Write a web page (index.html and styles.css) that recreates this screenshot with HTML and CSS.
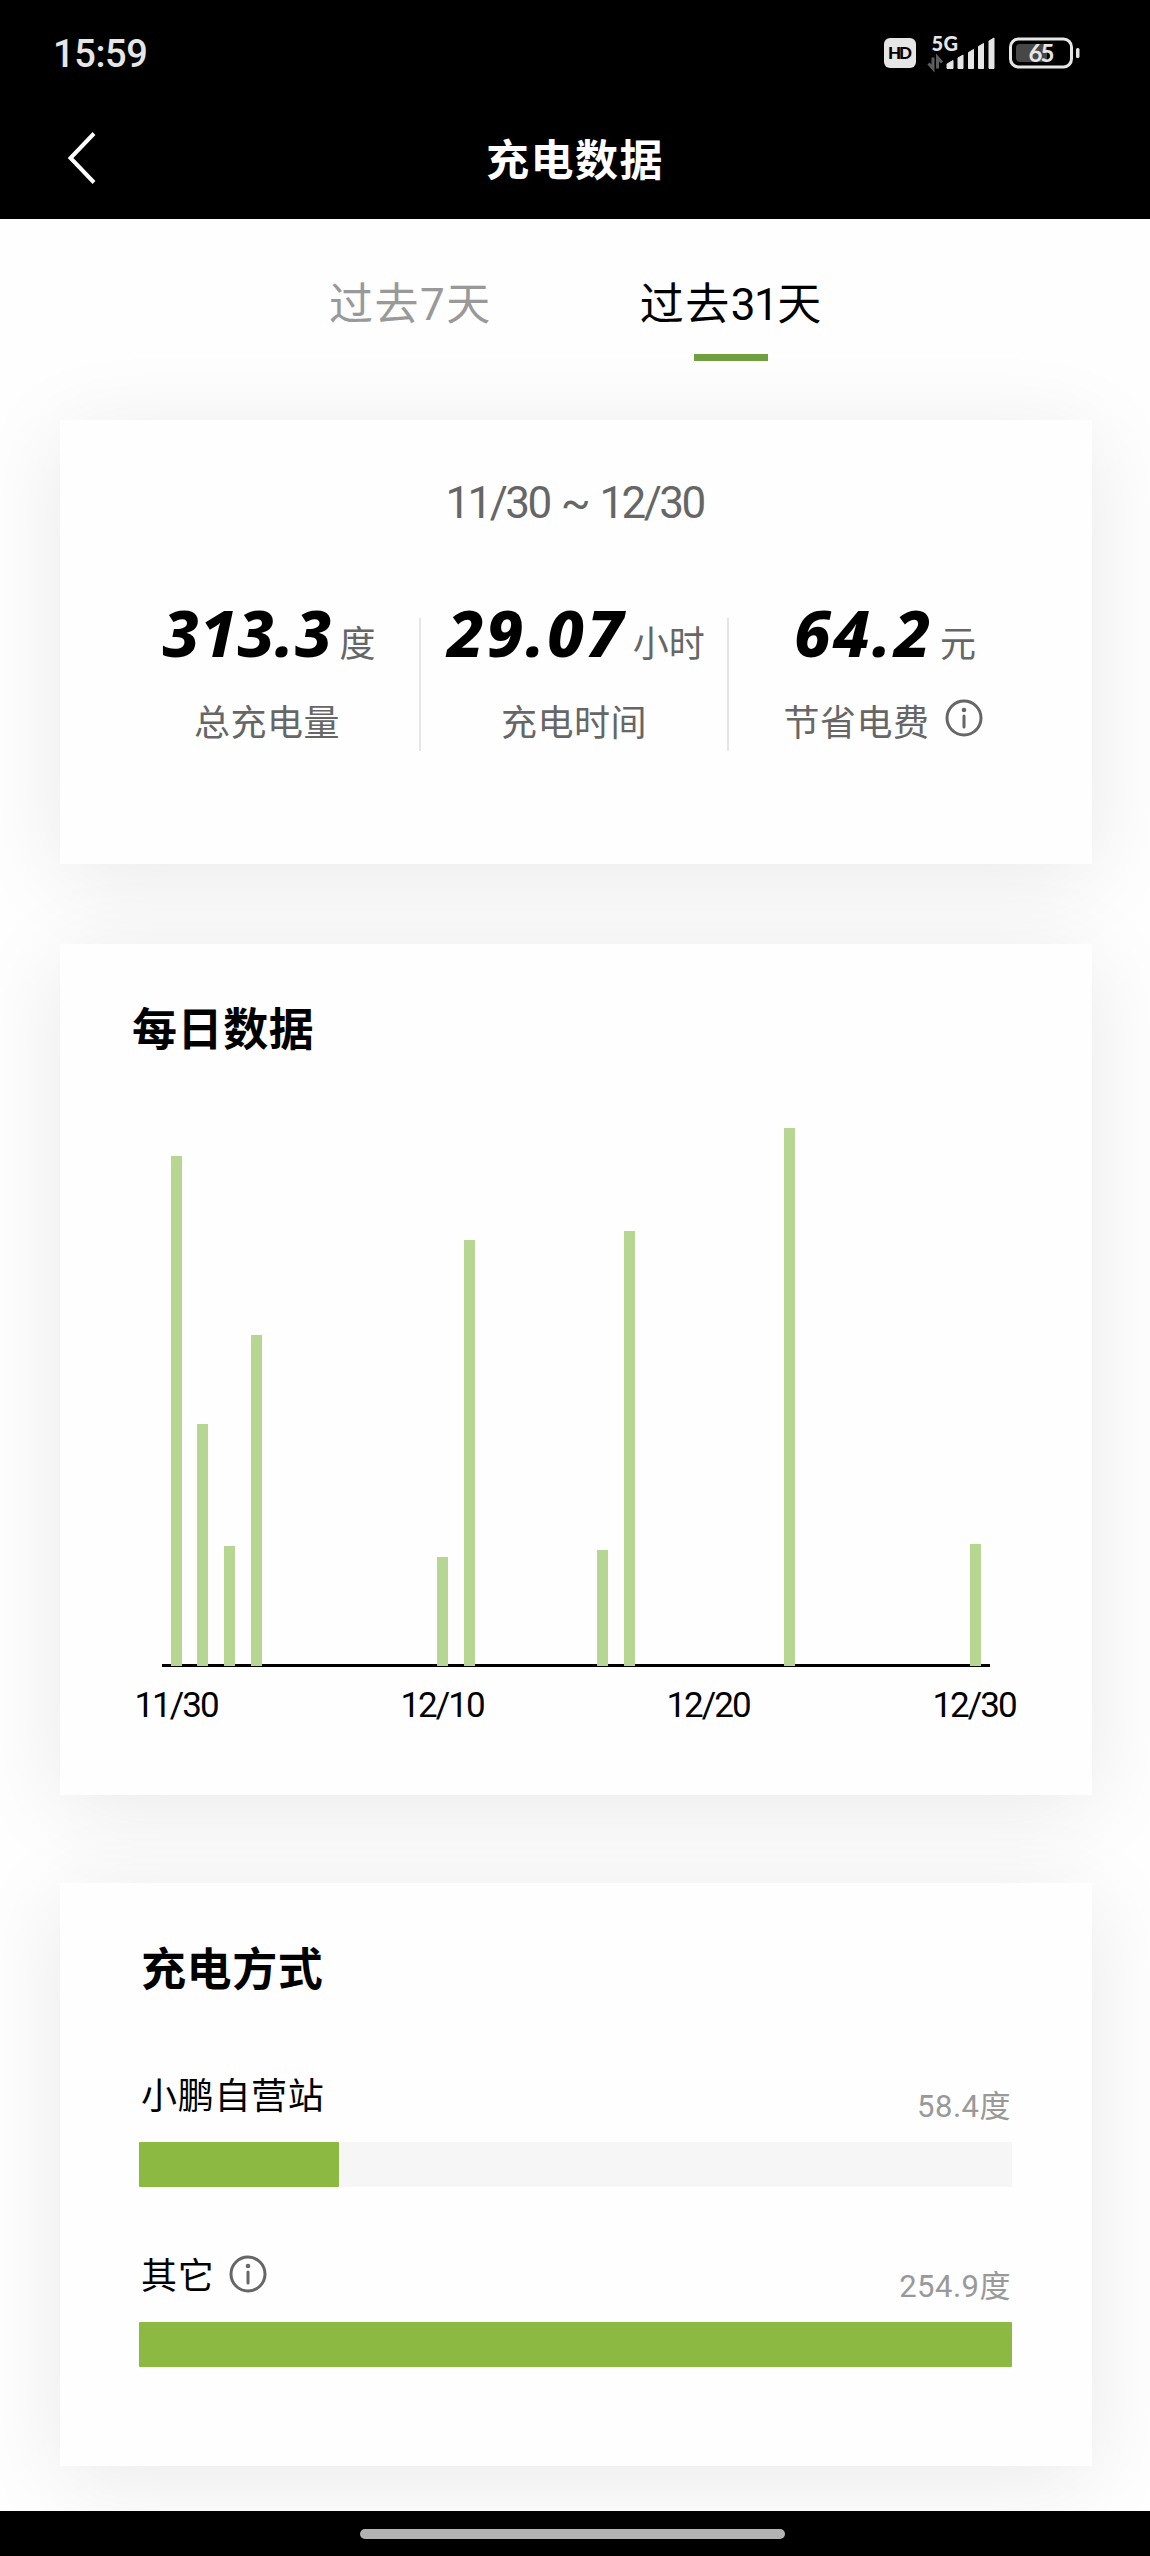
FILE: index.html
```html
<!DOCTYPE html>
<html lang="zh-CN">
<head>
  <meta charset="UTF-8" />
  <meta name="viewport" content="width=device-width, initial-scale=1.0" />
  <title>充电数据</title>
  <link rel="stylesheet" href="styles.css">
</head>
<body>
  <header class="header">
    <div class="status-bar">
      <div class="time">15:59</div>
      <svg class="status-icons" width="196" height="56" viewBox="0 -10 196 56">
        <rect x="0" y="3" width="32" height="30" rx="6" fill="#e6e6e6" />
        <text class="hd-text" x="4" y="23.500" textLength="24">HD</text>
        <text class="net-text" x="47.500" y="16" textLength="26.500">5G</text>
        <path d="M49 22.500v11l-4.500-5M53.500 33.500v-11l4.500 5" fill="none" stroke="#5c5c5c" stroke-width="3" />
        <path d="M63 33.500v-4.500l6-3.500v8zM74 33.500v-10.500l5-3v13.500zM84.500 33.500v-16l5-3v19zM94.500 33.500v-22l5-3v25zM105 33.500v-27.500l5-3v30.500z" fill="#e6e6e6" stroke="#e6e6e6" stroke-width="1" stroke-linejoin="round" />
        <rect x="126.500" y="4" width="61" height="28" rx="8" fill="none" stroke="#e6e6e6" stroke-width="3" />
        <path d="M136 9h27v18h-27q-4 0-4-4v-10q0-4 4-4z" fill="#474747" />
        <rect x="192" y="13" width="3.500" height="10" rx="1.500" fill="#e6e6e6" />
        <text class="battery-text" x="144.500" y="26.500" textLength="26">65</text>
      </svg>
    </div>
    <div class="title-bar">
      <svg class="back" width="30" height="52" viewBox="0 0 30 52">
        <path d="M27 1.500L3.500 26L27 50.500" fill="none" stroke="#fff" stroke-width="4" />
      </svg>
      <h1>充电数据</h1>
    </div>
  </header>

  <nav class="tabs">
    <div class="tab">过去7天</div>
    <div class="tab active">过去<span class="days">31</span>天</div>
  </nav>

  <main>
    <section class="card summary">
      <div class="period">11/30 ~ 12/30</div>
      <div class="stats">
        <div class="stat">
          <div class="amount"><span class="value">313.3</span><span class="unit">度</span></div>
          <div class="label">总充电量</div>
        </div>
        <div class="stat">
          <div class="amount"><span class="value">29.07</span><span class="unit">小时</span></div>
          <div class="label">充电时间</div>
        </div>
        <div class="stat">
          <div class="amount"><span class="value">64.2</span><span class="unit">元</span></div>
          <div class="label">节省电费
            <svg class="info" width="38" height="38" viewBox="0 0 38 38">
              <circle cx="19" cy="19" r="17" />
              <path d="M19 17v11" />
              <circle class="dot" cx="19" cy="11" r="2.300" />
            </svg>
          </div>
        </div>
      </div>
    </section>

    <section class="card daily">
      <h2>每日数据</h2>
      <div class="chart">
        <div class="bar" style="grid-column: 1; height: 510px"></div>
        <div class="bar" style="grid-column: 2; height: 242px"></div>
        <div class="bar" style="grid-column: 3; height: 120px"></div>
        <div class="bar" style="grid-column: 4; height: 331px"></div>
        <div class="bar" style="grid-column: 11; height: 109px"></div>
        <div class="bar" style="grid-column: 12; height: 426px"></div>
        <div class="bar" style="grid-column: 17; height: 116px"></div>
        <div class="bar" style="grid-column: 18; height: 435px"></div>
        <div class="bar" style="grid-column: 24; height: 538px"></div>
        <div class="bar" style="grid-column: 31; height: 122px"></div>
      </div>
      <div class="dates">
        <span>11/30</span>
        <span>12/10</span>
        <span>12/20</span>
        <span>12/30</span>
      </div>
    </section>

    <section class="card methods">
      <h2>充电方式</h2>
      <div class="method">
        <div class="method-head">
          <span class="name">小鹏自营站</span>
          <span class="kwh">58.4度</span>
        </div>
        <div class="track"><div class="fill" style="width: 22.9%"></div></div>
      </div>
      <div class="method">
        <div class="method-head">
          <span class="name">其它
            <svg class="info" width="38" height="38" viewBox="0 0 38 38">
              <circle cx="19" cy="19" r="17" />
              <path d="M19 17v11" />
              <circle class="dot" cx="19" cy="11" r="2.300" />
            </svg>
          </span>
          <span class="kwh">254.9度</span>
        </div>
        <div class="track"><div class="fill" style="width: 100%"></div></div>
      </div>
    </section>
  </main>

  <footer class="home-bar">
    <div class="handle"></div>
  </footer>
</body>
</html>
```
FILE: styles.css
```css
* {
  box-sizing: border-box;
}
body {
  margin: 0;
  height: 2556px;
  display: flex;
  flex-direction: column;
  background: #fefefe;
  color: #000;
  font-family: Roboto, "Noto Sans CJK SC", sans-serif;
  overflow: hidden;
}
h1,
h2 {
  margin: 0;
}
.header {
  height: 219px;
  background: #000;
}
.status-bar {
  height: 108px;
  padding: 0 70px 0 53px;
  display: flex;
  align-items: center;
  justify-content: space-between;
}
.time {
  color: #e6e6e6;
  font-size: 38px;
  font-weight: 500;
  letter-spacing: -0.4px;
  line-height: 44px;
}
.status-icons {
  font-family: Lato, sans-serif;
  font-weight: 900;
  margin-bottom: 2px;
}
.hd-text {
  font-size: 17px;
  fill: #000;
}
.net-text {
  font-size: 20px;
  fill: #e6e6e6;
}
.battery-text {
  font-size: 24px;
  font-weight: 700;
  fill: #e6e6e6;
}
.title-bar {
  height: 100px;
  padding: 0 67px;
  display: grid;
  grid-template-columns: 30px 1fr 30px;
  align-items: center;
}
.title-bar h1 {
  color: #fff;
  font-size: 43px;
  font-weight: 700;
  letter-spacing: 1.5px;
  line-height: 60px;
  padding-top: 5px;
  text-align: center;
}
.tabs {
  height: 201px;
  padding: 56px 0 0 329px;
  display: flex;
  gap: 148px;
}
.tab {
  color: #999;
  font-size: 44px;
  letter-spacing: 1.5px;
  line-height: 60px;
}
.tab .days {
  letter-spacing: -1.5px;
}
.tab.active {
  color: #000;
}
.tab.active::after {
  content: "";
  display: block;
  width: 74px;
  height: 7px;
  margin: 19px auto 0;
  background: #70a03f;
}
main {
  padding: 0 58px 0 60px;
  flex: 1;
}
.card {
  background: #fefefe;
  box-shadow: 0 13px 85px rgba(0, 0, 0, 0.088);
}
.summary {
  height: 444px;
  padding-top: 53px;
  margin-bottom: 80px;
}
.period {
  padding-right: 3px;
  color: #666;
  font-size: 44px;
  letter-spacing: -2.6px;
  word-spacing: 3px;
  line-height: 60px;
  text-align: center;
}
.stats {
  margin: 85px 55px 0 55px;
  height: 133px;
  display: grid;
  grid-template-columns: 306px 308px 1fr;
}
.stat {
  height: 133px;
  display: flex;
  flex-direction: column;
  align-items: center;
  border-right: 2px solid #e6e6e6;
}
.stat:last-child {
  border-right: none;
}
.amount {
  height: 70px;
  margin-top: -21px;
  padding-left: 4px;
  line-height: 70px;
  white-space: nowrap;
}
.value {
  font-family: "Noto Sans", sans-serif;
  font-size: 65px;
  font-weight: 800;
  font-style: italic;
  letter-spacing: 2.5px;
}
.stat:first-child .value {
  letter-spacing: 0.8px;
}
.unit {
  margin-left: 7px;
  color: #666;
  font-size: 36px;
  line-height: 1;
}
.label {
  margin-top: 32px;
  display: flex;
  align-items: center;
  gap: 15px;
  color: #666;
  font-size: 36px;
  letter-spacing: 0.5px;
  line-height: 50px;
}
.info {
  fill: none;
  stroke: #666;
  stroke-width: 3;
  stroke-linecap: round;
}
.info .dot {
  fill: #666;
  stroke: none;
}
.label .info {
  margin-bottom: 12px;
}
h2 {
  font-size: 45px;
  font-weight: 700;
  letter-spacing: 0.6px;
  line-height: 60px;
}
.daily {
  height: 851px;
  padding: 57px 72px 0;
  margin-bottom: 88px;
}
.chart {
  width: 828px;
  height: 553px;
  margin: 53px 0 0 30px;
  padding: 0 1px 1px;
  display: grid;
  grid-template-columns: repeat(31, 1fr);
  align-items: end;
  justify-items: center;
  background: linear-gradient(#000, #000) bottom / 100% 3px no-repeat;
}
.bar {
  width: 11px;
  background: #b7d691;
}
.dates {
  width: 882px;
  margin: 18px 0 0 2px;
  display: flex;
  justify-content: space-between;
  font-size: 35px;
  letter-spacing: -2px;
  line-height: 42px;
}
.dates span {
  width: 84px;
  text-align: center;
}
.methods {
  height: 583px;
  padding: 58px 80px 0 79px;
}
.methods h2 {
  padding-left: 2px;
  margin-bottom: 62px;
}
.method {
  margin-bottom: 56px;
}
.method-head {
  height: 79px;
  padding: 0 1px 0 2px;
  display: flex;
  justify-content: space-between;
}
.name {
  display: flex;
  align-items: center;
  gap: 15px;
  height: 59px;
  font-size: 36px;
  letter-spacing: 0.7px;
}
.name .info {
  margin-top: 2px;
}
.kwh {
  margin-top: 22px;
  color: #999;
  font-size: 31px;
  letter-spacing: 0.5px;
  line-height: 44px;
}
.track {
  height: 45px;
  background: #f6f6f6;
}
.fill {
  height: 45px;
  border-radius: 1px;
  background: #8bb942;
}
.home-bar {
  height: 45px;
  padding: 18px 0 0 360px;
  background: #000;
  position: relative;
}
.handle {
  width: 425px;
  height: 10px;
  border-radius: 5px;
  background: #b3b3b3;
}
```
